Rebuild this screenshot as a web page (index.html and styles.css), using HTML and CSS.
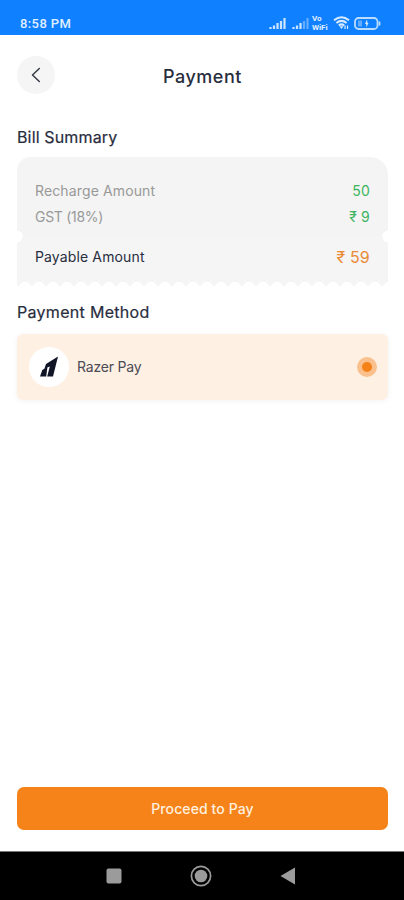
FILE: index.html
```html
<!DOCTYPE html>
<html lang="en">
<head>
<meta charset="utf-8">
<title>Payment</title>
<link rel="stylesheet" href="styles.css">
</head>
<body>
<div class="status">
  <span class="time">8:58 PM</span>
  <div class="indicators">
    <svg class="signal" width="18" height="13" viewBox="0 0 18 13"><path d="M1.5 10v2M5 8.500v3.500M8.500 6v6M12 4v8M15.500 1v11" /></svg>
    <svg class="signal second" width="18" height="13" viewBox="0 0 18 13"><path d="M1.500 10v2M5 8.500v3.500M8.500 6v6"/><path opacity=".45" d="M12 4v8M15.500 1v11"/></svg>
    <span class="vowifi"><span>Vo</span><span>WiFi</span></span>
    <svg class="wifi" width="17" height="14" viewBox="0 0 17 14"><path d="M1 4.300Q8.500-1.800 16 4.300M3.400 7Q8.500 2.800 13.600 7M5.800 9.500Q8.500 7.300 11.200 9.500"/><path class="solid" d="M6.500 10.300h4L8.500 13z"/><path class="thin" d="M12 13V9.500M14.500 9.500V13"/></svg>
    <svg class="battery" width="27" height="13" viewBox="0 0 27 13"><rect x="1" y="1" width="22.500" height="11" rx="3.500"/><path d="M25.500 4.500v4"/><path class="level" d="M4 3.500h4v6H4z"/><path class="bolt" d="M13 2.500L11 7h1.300v3.500L14.500 6h-1z"/></svg>
  </div>
</div>
<header class="header">
  <div class="back"><svg width="10" height="16" viewBox="0 0 10 16"><path d="M8.300 1.500L1.500 8l6.800 6.500"/></svg></div>
  <h1>Payment</h1>
</header>
<main>
  <h2 class="summary-title">Bill Summary</h2>
  <section class="bill">
    <div class="charges">
      <div class="row"><span class="recharge">Recharge Amount</span><span class="green">50</span></div>
      <div class="row"><span class="gst">GST (18%)</span><span class="green">₹ 9</span></div>
    </div>
    <div class="payable"><span class="payable-name">Payable Amount</span><span class="total">₹ 59</span></div>
  </section>
  <h2 class="method-title">Payment Method</h2>
  <section class="method">
    <div class="logo"><svg width="20" height="24" viewBox="0 0 20 24"><path d="M1 21.500L3.300 15l5.200-3.200L7.200 21.500zM8.200 21.500l2.600-10-5.300 2 1.500-4.500L19 1.500l-5 20z"/></svg></div>
    <span class="method-name">Razer Pay</span>
    <span class="radio"></span>
  </section>
</main>
<div class="pay"><span>Proceed to Pay</span></div>
<nav class="nav">
  <svg width="16" height="16" viewBox="0 0 16 16"><rect x=".5" y=".5" width="15" height="15" rx="2"/></svg>
  <svg width="22" height="22" viewBox="0 0 22 22"><circle class="ring" cx="11" cy="11" r="9.600"/><circle cx="11" cy="11" r="6.300"/></svg>
  <svg width="16" height="18" viewBox="0 0 16 18"><path d="M15 .5v17L.5 9z"/></svg>
</nav>
</body>
</html>
```
FILE: styles.css
```css
* { box-sizing: border-box; }
body {
  margin: 0;
  height: 900px;
  display: flex;
  flex-direction: column;
  background: #fff;
  color: #282d3d;
  font-family: Inter, sans-serif;
}
svg { display: block; flex: none; }
.status {
  height: 35px;
  padding: 11px 23px 0 20px;
  display: flex;
  justify-content: space-between;
  background: #0f80ff;
  color: #e0efff;
}
.time { font: 500 13px/25px Roboto, sans-serif; letter-spacing: .4px; }
.indicators { display: flex; height: 24px; align-items: center; }
.signal { fill: none; stroke: #cce4ff; stroke-width: 2.200; margin-top: 1px; }
.second { margin-left: 5px; }
.vowifi {
  width: 19px;
  margin-left: 2px;
  display: flex;
  flex-direction: column;
  align-items: flex-start;
  font: 700 8px/9px Roboto, sans-serif;
  margin-top: -1px;
}
.wifi { margin-left: 2px; fill: none; stroke: #d8eaff; stroke-width: 2; }
.wifi .solid { fill: #d8eaff; stroke: none; }
.wifi .thin { stroke-width: 1.200; }
.battery { margin-left: 4px; fill: none; stroke: #b9dcff; stroke-width: 1.800; }
.battery .level { fill: #62adff; stroke: none; }
.battery .bolt { fill: #d8eaff; stroke: none; }
.header {
  height: 82px;
  padding: 21px 17px 0;
  display: grid;
  grid-template-columns: 38px 1fr 38px;
  align-items: start;
}
.back {
  width: 38px;
  height: 38px;
  border-radius: 50%;
  background: #f5f5f5;
  display: grid;
  place-items: center;
}
.back svg { fill: none; stroke: #383c48; stroke-width: 1.500; stroke-linecap: round; stroke-linejoin: round; }
h1 {
  margin: 0;
  padding-left: 1px;
  text-align: center;
  font-size: 18px;
  line-height: 42px;
  font-weight: 500;
  letter-spacing: .55px;
}
main { flex: 1; padding: 0 16px 0 17px; }
h2 { margin: 0; font-size: 16px; font-weight: 400; -webkit-text-stroke: .2px; }
.summary-title { line-height: 40px; letter-spacing: .15px; }
.bill { color: #999; font-size: 14px; }
.charges {
  height: 80px;
  padding: 21px 18px 0;
  border-radius: 14px 18px 0 0;
  background:
    radial-gradient(circle at 0 100%, #fff 6px, transparent 6.500px),
    radial-gradient(circle at 100% 100%, #fff 6px, transparent 6.500px),
    #f4f4f4;
}
.row { display: flex; justify-content: space-between; line-height: 26px; }
.recharge, .payable-name { letter-spacing: .13px; }
.gst { letter-spacing: -.3px; }
.green { color: #3cb460; letter-spacing: .2px; }
.payable {
  height: 49px;
  padding: 0 18px;
  display: flex;
  justify-content: space-between;
  line-height: 40px;
  color: #282d3d;
  background:
    radial-gradient(circle at 0 0, #fff 5px, transparent 5.500px) no-repeat,
    radial-gradient(circle at 100% 0, #fff 5px, transparent 5.500px) no-repeat,
    radial-gradient(circle at 7px 7px, #fff 5.800px, transparent 6.500px) 1px 44px / 14px 14px repeat-x,
    #f5f5f5;
}
.total { color: #e98a35; font-size: 16px; letter-spacing: .2px; }
.method-title { line-height: 48px; margin-top: 2px; letter-spacing: .3px; }
.method {
  height: 66px;
  margin-top: -2px;
  padding: 0 11px 0 12px;
  display: flex;
  align-items: center;
  border-radius: 6px;
  background: #fff0e4;
  box-shadow: 0 1px 6px #0000000d;
  font-size: 14px;
  color: #4b4b55;
}
.logo { width: 40px; height: 40px; border-radius: 50%; background: #fff; display: grid; place-items: center; }
.logo svg { fill: #111526; }
.method-name { margin: -2px 0 0 8px; letter-spacing: -.2px; }
.radio { width: 20px; height: 20px; margin-left: auto; border: 5px solid #fac08d; border-radius: 50%; background: #f58218; }
.pay {
  height: 43px;
  margin: 0 16px 21px 17px;
  border-radius: 7px;
  background: #f5831a;
  color: #fff0df;
  display: grid;
  place-items: center;
  font-size: 14px;
  font-weight: 500;
  letter-spacing: .1px;
}
.nav {
  height: 49px;
  border-top: 1px solid #777;
  background: #000;
  padding: 0 108px 0 106px;
  display: flex;
  align-items: center;
  justify-content: space-between;
}
.nav svg { fill: #9b9b9b; }
.nav .ring { fill: none; stroke: #9b9b9b; stroke-width: 1.700; }
```
